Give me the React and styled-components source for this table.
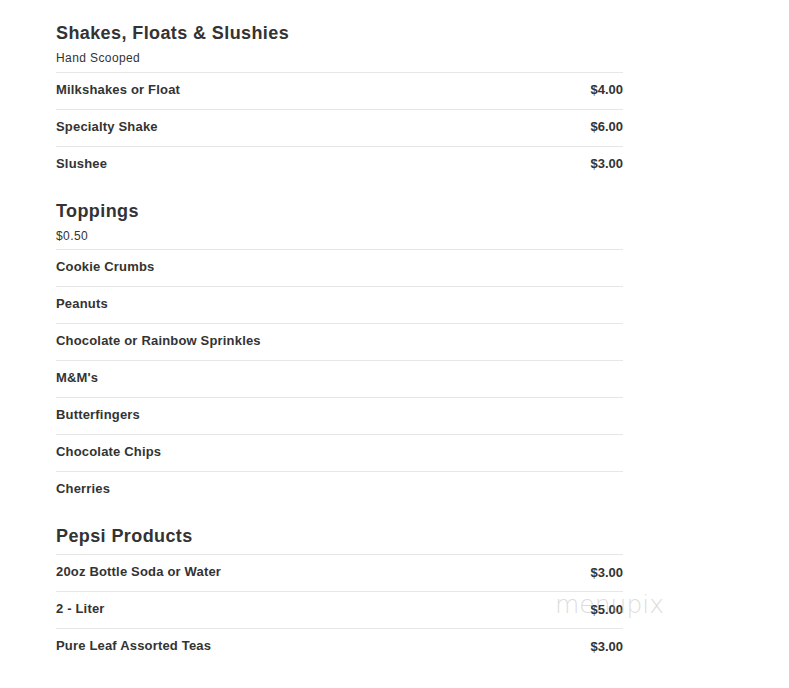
import React from "react";
import styled, { createGlobalStyle } from "styled-components";

const GlobalStyle = createGlobalStyle`
body {
  margin: 0;
  background: #fff;
  font-family: "Liberation Sans", Arial, sans-serif;
  color: #333;
}
`;

const Page = styled.div`
position: relative;
padding: 22px 0 0 56px;
width: 567px;
`;

const Section = styled.section`
display: flex;
flex-direction: column;
margin-bottom: 17px;
`;

const Heading = styled.h2`
margin: 0 0 ${(p) => (p.$alone ? "7px" : "6px")} 0;
font-size: 18px;
line-height: 22px;
font-weight: bold;
letter-spacing: 0.4px;
color: #333;
`;

const Desc = styled.div`
font-size: 12px;
line-height: 16px;
letter-spacing: 0.4px;
margin-bottom: ${(p) => (p.$tight ? "5px" : "6px")};
color: #333;
`;

const Row = styled.div`
display: flex;
justify-content: space-between;
align-items: center;
border-top: 1px solid #e6e6e6;
padding: 6px 0 10px 0;
height: 20px;
font-size: 13px;
font-weight: bold;
letter-spacing: 0.18px;
color: #333;
`;

const Price = styled.span`
letter-spacing: 0;
margin-top: ${(p) => (p.$low ? "2px" : "0")};
`;

const Watermark = styled.div`
position: absolute;
left: 555px;
top: 590px;
font-size: 25px;
font-family: "DejaVu Sans", sans-serif;
font-weight: 300;
color: rgba(185, 185, 185, 0.5);
pointer-events: none;
`;

const menu = [
  {
    title: "Shakes, Floats & Slushies",
    desc: "Hand Scooped",
    items: [
      ["Milkshakes or Float", "$4.00"],
      ["Specialty Shake", "$6.00"],
      ["Slushee", "$3.00"],
    ],
  },
  {
    title: "Toppings",
    desc: "$0.50",
    tight: true,
    items: [
      ["Cookie Crumbs"],
      ["Peanuts"],
      ["Chocolate or Rainbow Sprinkles"],
      ["M&M's"],
      ["Butterfingers"],
      ["Chocolate Chips"],
      ["Cherries"],
    ],
  },
  {
    title: "Pepsi Products",
    low: true,
    items: [
      ["20oz Bottle Soda or Water", "$3.00"],
      ["2 - Liter", "$5.00"],
      ["Pure Leaf Assorted Teas", "$3.00"],
    ],
  },
];

const App = () => {
  return (
    <Page>
      <GlobalStyle />
      {menu.map((sec) => (
        <Section key={sec.title}>
          <Heading $alone={!sec.desc}>{sec.title}</Heading>
          {sec.desc ? <Desc $tight={sec.tight}>{sec.desc}</Desc> : null}
          {sec.items.map(([name, price]) => (
            <Row key={name}>
              <span>{name}</span>
              {price ? <Price $low={sec.low}>{price}</Price> : null}
            </Row>
          ))}
        </Section>
      ))}
      <Watermark>menupix</Watermark>
    </Page>
  );
};

export default App;
